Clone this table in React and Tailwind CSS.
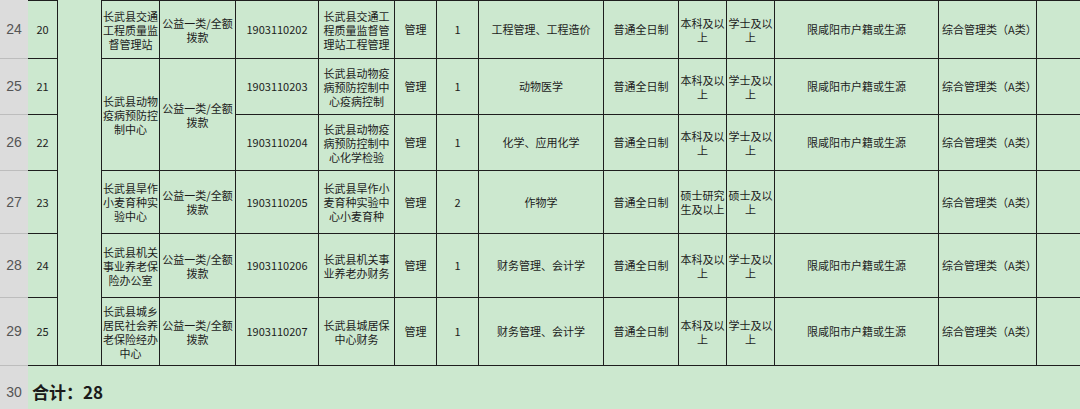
/* eslint-disable */
const FONT = '"Noto Sans CJK SC", "Noto Sans", sans-serif';

const FUND = ['公益一类/全额', '拨款'];

// [行号, 序号, 招聘单位, 岗位代码, 岗位名称, 人数, 专业, 学历, 学位, 户籍]
const ROWS = [
  [24, 20, ['长武县交通', '工程质量监', '督管理站'], '1903110202', ['长武县交通工', '程质量监督管', '理站工程管理'], 1, '工程管理、工程造价', ['本科及以', '上'], ['学士及以', '上'], '限咸阳市户籍或生源'],
  [25, 21, ['长武县动物', '疫病预防控', '制中心'], '1903110203', ['长武县动物疫', '病预防控制中', '心疫病控制'], 1, '动物医学', ['本科及以', '上'], ['学士及以', '上'], '限咸阳市户籍或生源'],
  [26, 22, null, '1903110204', ['长武县动物疫', '病预防控制中', '心化学检验'], 1, '化学、应用化学', ['本科及以', '上'], ['学士及以', '上'], '限咸阳市户籍或生源'],
  [27, 23, ['长武县旱作', '小麦育种实', '验中心'], '1903110205', ['长武县旱作小', '麦育种实验中', '心小麦育种'], 2, '作物学', ['硕士研究', '生及以上'], ['硕士及以', '上'], ''],
  [28, 24, ['长武县机关', '事业养老保', '险办公室'], '1903110206', ['长武县机关事', '业养老办财务'], 1, '财务管理、会计学', ['本科及以', '上'], ['学士及以', '上'], '限咸阳市户籍或生源'],
  [29, 25, ['长武县城乡', '居民社会养', '老保险经办', '中心'], '1903110207', ['长武县城居保', '中心财务'], 1, '财务管理、会计学', ['本科及以', '上'], ['学士及以', '上'], '限咸阳市户籍或生源'],
];

const Lines = ({ lines }) => (
  <div className="leading-[14px]">
    {lines.map((l, i) => <div key={i} className="whitespace-nowrap">{l}</div>)}
  </div>
);

const Cell = ({ children, className = '', top, last }) => (
  <div
    className={`flex items-center justify-center text-center text-[11px] text-[#1c1c1c] border-b border-[#1e1e1e] ${last ? '' : 'border-r'} ${top ? 'border-t' : ''} ${className}`}
  >
    {children}
  </div>
);

const RowHead = ({ n, className = '' }) => (
  <div className={`flex items-center justify-center bg-[#dcdcdc] border-b border-[#bdbdbd] text-[14px] text-[#555] ${className}`} style={{ fontFamily: '"Liberation Sans", Arial, sans-serif' }}>
    {n}
  </div>
);

export default function App() {
  return (
    <div className="w-[1080px] h-[409px] overflow-hidden bg-[#cce8cf]" style={{ fontFamily: FONT }}>
      <div className="grid grid-cols-[28px_30px_44px_58px_76px_83px_76px_42px_42px_125px_75px_48px_48px_164px_98px_43px] grid-rows-[59px_56px_56px_63px_64px_68px_52px] bg-[#cce8cf]">
        {ROWS.map(([n, seq, unit, code, pos, cnt, major, edu, deg, hukou], i) => {
          const top = i === 0;
          const merged = i === 1;
          return [
            <RowHead key={`h${n}`} n={n} />,
            <Cell key={`s${n}`} top={top}>{seq}</Cell>,
            top && <Cell key="blank" className="row-span-6" />,
            unit && <Cell key={`u${n}`} top={top} className={merged ? 'row-span-2' : ''}><Lines lines={unit} /></Cell>,
            unit && <Cell key={`f${n}`} top={top} className={merged ? 'row-span-2' : ''}><Lines lines={FUND} /></Cell>,
            <Cell key={`c${n}`} top={top} className="text-[10.5px]">{code}</Cell>,
            <Cell key={`p${n}`} top={top}><Lines lines={pos} /></Cell>,
            <Cell key={`g${n}`} top={top}>管理</Cell>,
            <Cell key={`n${n}`} top={top} className="text-[10px]">{cnt}</Cell>,
            <Cell key={`m${n}`} top={top}>{major}</Cell>,
            <Cell key={`x${n}`} top={top}>普通全日制</Cell>,
            <Cell key={`e${n}`} top={top}><Lines lines={edu} /></Cell>,
            <Cell key={`d${n}`} top={top}><Lines lines={deg} /></Cell>,
            <Cell key={`k${n}`} top={top}>{hukou}</Cell>,
            <Cell key={`t${n}`} top={top} className="justify-start pl-[3px]">综合管理类（A类）</Cell>,
            <Cell key={`z${n}`} top={top} last />,
          ];
        })}
        <RowHead n={30} className="border-b-0" />
        <div className="col-span-15 flex items-center pl-[4px] text-[17px] font-semibold text-[#1a1a1a]">
          合计：28
        </div>
      </div>
    </div>
  );
}
